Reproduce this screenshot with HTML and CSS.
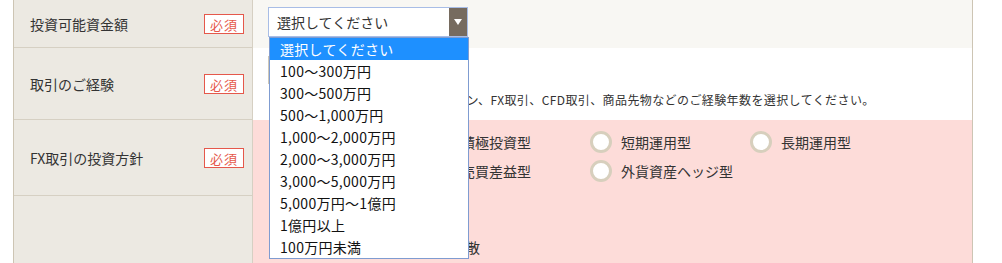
FILE: index.html
```html
<!DOCTYPE html>
<html lang="ja">
<head>
    <meta charset="UTF-8">
    <title>お客様情報の入力</title>
    <link rel="stylesheet" href="styles.css">
</head>
<body>
    <div class="form-table">

        <!-- 投資可能資金額 -->
        <div class="form-row">
            <div class="row-label">
                <span>投資可能資金額</span>
                <span class="required">必須</span>
            </div>
            <div class="row-body body-light">
                <div class="select-wrap">
                    <div class="select-box">
                        <span>選択してください</span>
                        <span class="select-arrow"></span>
                    </div>
                    <ul class="select-menu">
                        <li class="active">選択してください</li>
                        <li>100～300万円</li>
                        <li>300～500万円</li>
                        <li>500～1,000万円</li>
                        <li>1,000～2,000万円</li>
                        <li>2,000～3,000万円</li>
                        <li>3,000～5,000万円</li>
                        <li>5,000万円～1億円</li>
                        <li>1億円以上</li>
                        <li>100万円未満</li>
                    </ul>
                </div>
            </div>
        </div>

        <!-- 取引のご経験 -->
        <div class="form-row">
            <div class="row-label">
                <span>取引のご経験</span>
                <span class="required">必須</span>
            </div>
            <div class="row-body body-white">
                <div class="select-box select-plain">
                    <span>選択してください</span>
                    <span class="select-arrow"></span>
                </div>
                <p class="note">※株式、投資信託、債券、オプション、FX取引、CFD取引、商品先物などのご経験年数を選択してください。</p>
            </div>
        </div>

        <!-- FX取引の投資方針 -->
        <div class="form-row">
            <div class="row-label">
                <span>FX取引の投資方針</span>
                <span class="required">必須</span>
            </div>
            <div class="row-body body-pink">
                <div class="radio-list">
                    <label class="radio"><span class="radio-circle"></span>安定運用型</label>
                    <label class="radio"><span class="radio-circle"></span>積極投資型</label>
                    <label class="radio"><span class="radio-circle"></span>短期運用型</label>
                    <label class="radio"><span class="radio-circle"></span>長期運用型</label>
                    <label class="radio"><span class="radio-circle"></span>スワップ重視型</label>
                    <label class="radio"><span class="radio-circle"></span>売買差益型</label>
                    <label class="radio"><span class="radio-circle"></span>外貨資産ヘッジ型</label>
                </div>
            </div>
        </div>

        <!-- 投資目的 -->
        <div class="form-row">
            <div class="row-label"></div>
            <div class="row-body body-pink">
                <p class="purpose">資産形成および運用リスクの分散</p>
            </div>
        </div>

    </div>
</body>
</html>
```

FILE: styles.css
```css
/* Global */
body {
    margin: 0;
    padding: 0;
    background-color: #ffffff;
    font-family: "Noto Sans CJK JP", "Noto Sans", sans-serif;
    color: #333;
}

/* Table */
.form-table {
    width: 960px;
    margin-left: 13px;
    border-left: 1px solid #cdc5b4;
    border-right: 1px solid #cdc5b4;
    box-sizing: border-box;
}

.form-row {
    display: flex;
}

.row-label {
    width: 239px;
    flex-shrink: 0;
    box-sizing: border-box;
    display: flex;
    align-items: center;
    justify-content: space-between;
    padding: 0 8px 0 16px;
    background-color: #ece9e2;
    border-right: 1px solid #d6d0c3;
    border-bottom: 1px solid #d6d0c3;
    font-size: 14px;
}

.row-body {
    flex: 1;
    padding-left: 15px;
}

.body-light {
    background-color: #f8f7f3;
    height: 48px;
    box-sizing: border-box;
    padding-top: 7px;
}

.body-white {
    background-color: #ffffff;
    height: 72px;
    box-sizing: border-box;
    padding-top: 8px;
}

.body-pink {
    background-color: #fddcd9;
}

.form-row:nth-child(3) .row-body {
    height: 76px;
    box-sizing: border-box;
    padding-top: 11px;
}

.form-row:nth-child(4) .row-body {
    height: 70px;
    box-sizing: border-box;
    padding-top: 41px;
}

/* Required badge */
.required {
    display: inline-block;
    padding: 0 5px;
    height: 20px;
    line-height: 19px;
    box-sizing: border-box;
    border: 1px solid #e5584b;
    background-color: #ffffff;
    color: #e5584b;
    font-size: 13px;
    letter-spacing: 1px;
}

/* Select */
.select-wrap {
    position: relative;
    width: 200px;
}

.select-box {
    display: flex;
    align-items: center;
    justify-content: space-between;
    width: 200px;
    height: 30px;
    box-sizing: border-box;
    border: 1px solid #a8bde6;
    background-color: #ffffff;
    padding-left: 8px;
    font-size: 14px;
}

.select-plain {
    height: 28px;
    border-color: #cfc8b8;
}

.select-arrow {
    width: 18px;
    height: 100%;
    background-color: #766b5f;
    display: flex;
    align-items: center;
    justify-content: center;
}

.select-arrow::after {
    content: "";
    border-left: 4px solid transparent;
    border-right: 4px solid transparent;
    border-top: 6px solid #ffffff;
}

/* Open dropdown menu */
.select-menu {
    position: absolute;
    top: 30px;
    left: 1px;
    width: 200px;
    margin: 0;
    padding: 0;
    list-style: none;
    box-sizing: border-box;
    border: 1px solid #7f9cd1;
    background-color: #ffffff;
    z-index: 10;
}

.select-menu li {
    height: 22px;
    line-height: 22px;
    padding-left: 10px;
    font-size: 14px;
    letter-spacing: 0.3px;
    color: #111;
    white-space: nowrap;
}

.select-menu li.active {
    background-color: #1e90ff;
    color: #ffffff;
}

/* Notes */
.note {
    margin: 7px 0 0 0;
    font-size: 12px;
    line-height: 18px;
    letter-spacing: 0.4px;
    white-space: nowrap;
}

.purpose {
    margin: 0;
    font-size: 14px;
    line-height: 20px;
    padding-left: 2px;
}

/* Radios */
.radio-list {
    display: grid;
    grid-template-columns: repeat(4, 160px);
    row-gap: 7px;
    padding-left: 2px;
}

.radio {
    display: flex;
    align-items: center;
    height: 22px;
    font-size: 14px;
    white-space: nowrap;
}

.radio-circle {
    width: 22px;
    height: 22px;
    box-sizing: border-box;
    border: 3px solid #d7cfbd;
    border-radius: 50%;
    background-color: #ffffff;
    margin-right: 9px;
}
```
